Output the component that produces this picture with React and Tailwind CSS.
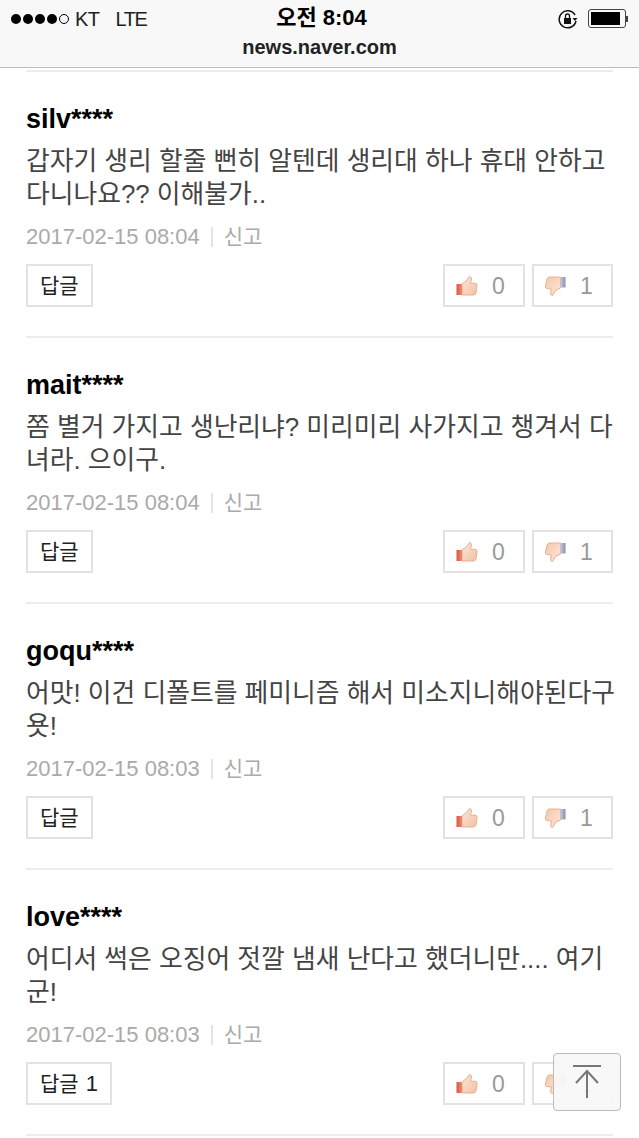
const font = { fontFamily: '"Liberation Sans", "Noto Sans CJK KR", sans-serif' };

const comments = [
  { id: "silv****", lines: ["갑자기 생리 할줄 뻔히 알텐데 생리대 하나 휴대 안하고", "다니나요?? 이해불가.."], date: "2017-02-15 08:04", reply: "답글" },
  { id: "mait****", lines: ["쫌 별거 가지고 생난리냐? 미리미리 사가지고 챙겨서 다", "녀라. 으이구."], date: "2017-02-15 08:04", reply: "답글" },
  { id: "goqu****", lines: ["어맛! 이건 디폴트를 페미니즘 해서 미소지니해야된다구", "욧!"], date: "2017-02-15 08:03", reply: "답글" },
  { id: "love****", lines: ["어디서 썩은 오징어 젓깔 냄새 난다고 했더니만.... 여기", "군!"], date: "2017-02-15 08:03", reply: "답글", count: 1 },
];

function ThumbUp({ idx }) {
  return (
    <svg width="22" height="20" viewBox="0 0 22 20">
      <defs>
        <linearGradient id={`up${idx}`} x1="0" y1="0" x2="1" y2="1">
          <stop offset="0" stopColor="#fbe8dc" />
          <stop offset="1" stopColor="#f3bfa2" />
        </linearGradient>
        <linearGradient id={`cuff${idx}`} x1="0" y1="0" x2="1" y2="0">
          <stop offset="0" stopColor="#dc5540" />
          <stop offset="1" stopColor="#e98f76" />
        </linearGradient>
      </defs>
      <path d="M6 8 L11 4 L13.5 0.5 Q15.5 0.5 15.5 3 L14.5 7 L20 7.5 Q21.5 8 21 10 L20 17 Q19.5 19 17 19 L6 19 Z" fill={`url(#up${idx})`} stroke="#e8b092" strokeWidth="1" />
      <rect x="0.5" y="8" width="5.5" height="11" fill={`url(#cuff${idx})`} />
    </svg>
  );
}

function ThumbDown({ idx }) {
  return (
    <svg width="22" height="20" viewBox="0 0 22 20">
      <defs>
        <linearGradient id={`down${idx}`} x1="0" y1="0" x2="1" y2="1">
          <stop offset="0" stopColor="#f7c6aa" />
          <stop offset="1" stopColor="#fbe8dc" />
        </linearGradient>
        <linearGradient id={`cuffd${idx}`} x1="0" y1="0" x2="1" y2="0">
          <stop offset="0" stopColor="#c5cbd8" />
          <stop offset="1" stopColor="#7f92b4" />
        </linearGradient>
      </defs>
      <path d="M15.5 12 L11 14 L7.5 19.5 Q5.5 19.5 5.5 17 L6.5 13 L1.5 12.5 Q0 12 0.5 10 L2 3 Q2.5 1 5 1 L15.5 1 Z" fill={`url(#down${idx})`} stroke="#e8b092" strokeWidth="1" />
      <rect x="15.5" y="1" width="5" height="10.5" fill={`url(#cuffd${idx})`} />
    </svg>
  );
}

function Comment({ c, idx }) {
  return (
    <div className="mx-[26px] h-[266px] border-b-2 border-[#ececec]">
      <div className="pt-[31px] text-[27px] leading-[33px] font-bold text-black">{c.id}</div>
      <div className="pt-[9px] text-[25.8px] leading-[33px] text-[#444]">
        {c.lines.map((l) => (
          <div key={l} className="whitespace-nowrap">{l}</div>
        ))}
      </div>
      <div className="flex items-center pt-[10px] leading-[32px] text-[#aaa]">
        <span className="text-[22px]">{c.date}</span>
        <span className="mx-[11px] h-[20px] w-[2px] bg-[#e4e4e4]" />
        <span className="text-[21px]">신고</span>
      </div>
      <div className="flex justify-between pt-[11px]">
        <div className="flex h-[43px] items-center gap-[7px] border-2 border-[#e2e2e2] px-[12px] text-[21px] text-[#222]">
          <span>{c.reply}</span>
          {c.count && <span className="text-[22px]">{c.count}</span>}
        </div>
        <div className="flex gap-[7px] text-[23px] text-[#999]">
          <div className="flex h-[43px] w-[82px] items-center gap-[14px] border-2 border-[#e2e2e2] pl-[11px]">
            <ThumbUp idx={idx} />
            <span className="pt-[2px]">0</span>
          </div>
          <div className="flex h-[43px] w-[81px] items-center gap-[13px] border-2 border-[#e2e2e2] pl-[11px]">
            <ThumbDown idx={idx} />
            <span className="pt-[2px]">1</span>
          </div>
        </div>
      </div>
    </div>
  );
}

export default function App() {
  return (
    <div className="relative h-[1138px] w-[639px] overflow-hidden bg-white" style={font}>
      <div className="relative h-[68px] border-b border-[#bdbdbd] bg-[#f8f8f8] text-black">
        <div className="flex h-[37px] items-center justify-between pl-[11px] pr-[11px]">
          <div className="flex items-center text-[20px] text-[#222]">
            <div className="flex gap-[2px]">
              {[0, 1, 2, 3].map((i) => (
                <span key={i} className="h-[10px] w-[10px] rounded-full bg-black" />
              ))}
              <span className="h-[10px] w-[10px] rounded-full border border-black" />
            </div>
            <span className="ml-[6px] tracking-[-0.5px]">KT</span>
            <span className="ml-[16px] tracking-[-1.5px]">LTE</span>
          </div>
          <div className="flex items-center gap-[10px]">
            <svg width="20" height="20" viewBox="0 0 20 20" fill="none">
              <path d="M17 6 A8.5 8.5 0 1 0 18 12" stroke="#111" strokeWidth="1.5" />
              <path d="M14.5 9 L19.5 9 L17 12 Z" fill="#111" />
              <rect x="6" y="9" width="7" height="6" fill="#111" />
              <path d="M7.5 9 V7 A2 2 0 0 1 11.5 7 V9" stroke="#111" strokeWidth="1.3" />
            </svg>
            <div className="flex items-center">
              <div className="h-[19px] w-[38px] rounded-[3px] border border-[#444] p-[2px]">
                <div className="h-full w-[29px] bg-black" />
              </div>
              <span className="h-[6px] w-[2px] bg-[#444]" />
            </div>
          </div>
        </div>
        <div className="absolute top-[6px] left-0 w-full pl-[4px] text-center text-[22px] leading-[24px] font-bold">오전 8:04</div>
        <div className="absolute top-[35px] left-0 w-full text-center text-[20px] leading-[24px] font-bold text-[#222]">news.naver.com</div>
      </div>
      <div className="mx-[26px] h-[4px] border-b-2 border-[#ececec]" />
      {comments.map((c, i) => (
        <Comment key={c.id} c={c} idx={i} />
      ))}
      <div className="absolute top-[1053px] left-[553px] flex h-[58px] w-[68px] items-center justify-center rounded-[4px] border border-[#bbb] bg-[#f8f8f8]/95">
        <svg width="30" height="34" viewBox="0 0 30 34" fill="none" stroke="#777" strokeWidth="2">
          <path d="M1 1 H29" />
          <path d="M15 33 V6 M4 18 L15 6 L26 18" />
        </svg>
      </div>
    </div>
  );
}
